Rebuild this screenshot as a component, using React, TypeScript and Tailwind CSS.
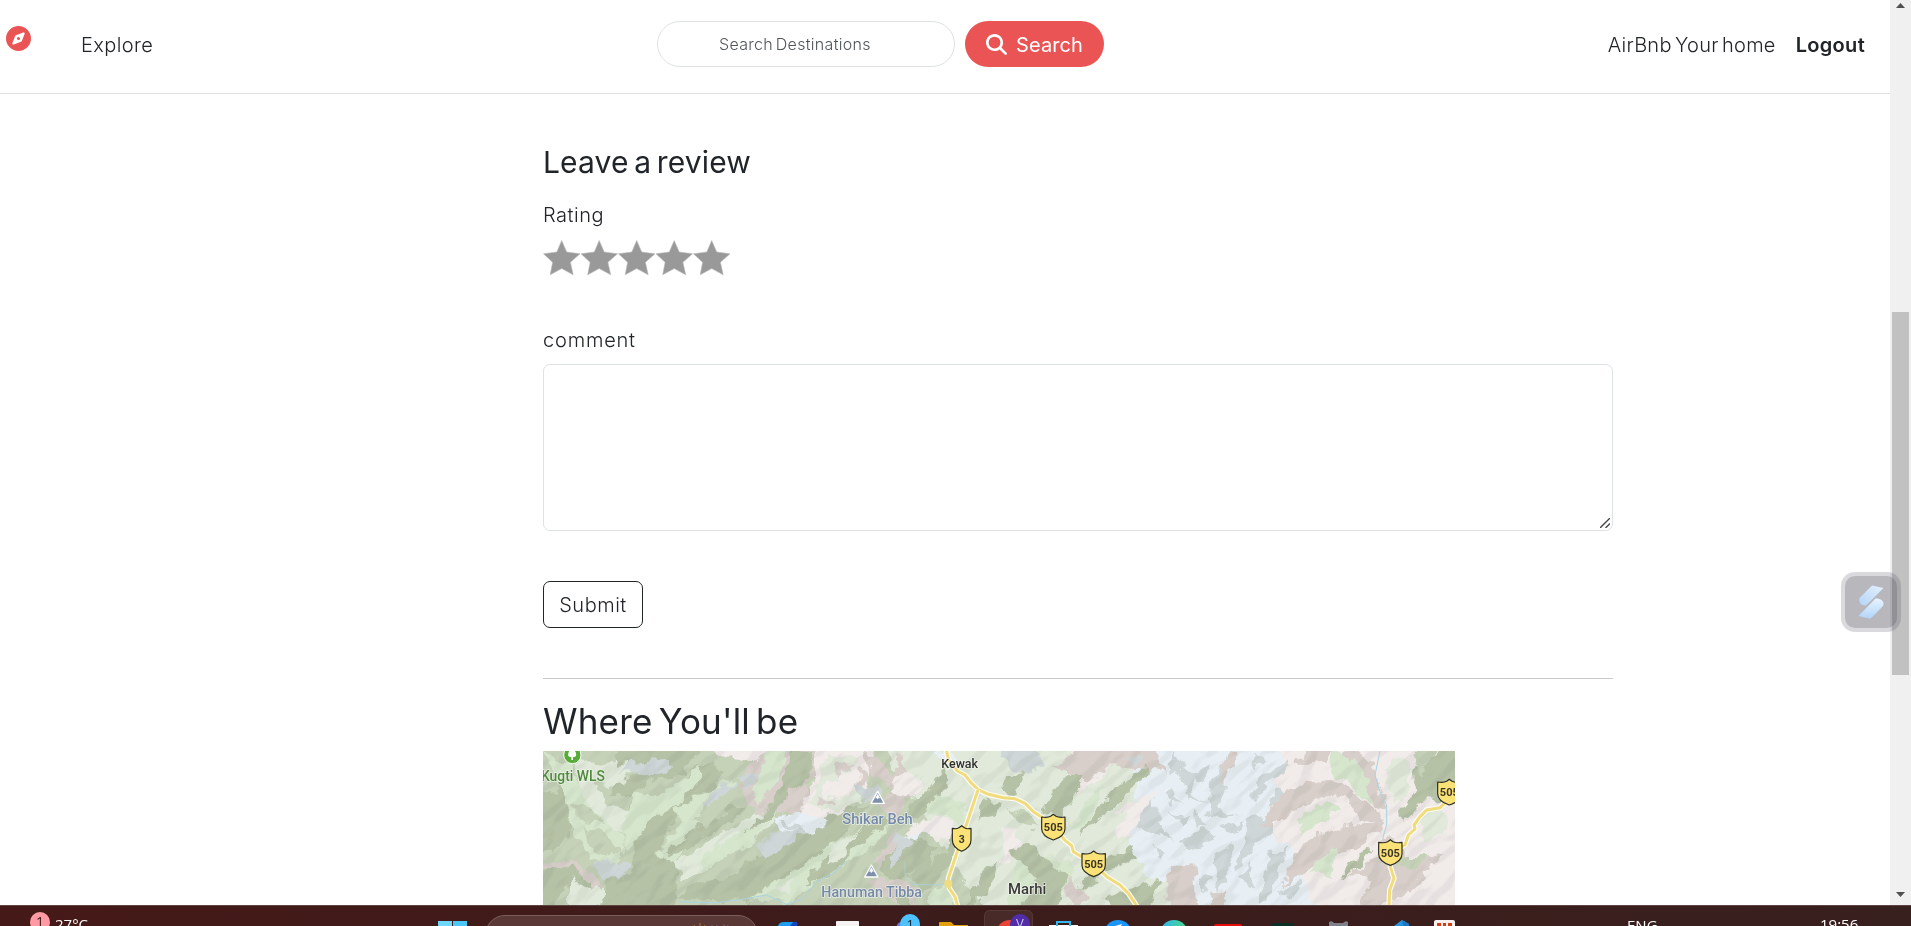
import React from "react";
import { FaCompass, FaMagnifyingGlass } from "react-icons/fa6";

const DARK = "#b6c2a6";
const MID = "#c5d2b8";
const LIGHT = "#d6e6cd";
const PALE = "#e0e9da";
const ROSE = "#d8cfca";
const BLUSH = "#f1ebea";
const ICE = "#e8eff4";
const SLATE = "#cfd6d7";

/* Terrain relief, drawn as broad fills first and finer slopes above them. */
const terrain: [string, string][] = [
  [PALE, "M-50 -50H2800V550H-50Z"],
  [MID, "M-50 -50H1700V550H-50Z"],
  [PALE, "M1000 -50H1800L1760 250 1830 550H1380L1200 300Z"],
  [ICE, "M1780 -50H2310L2220 140 2180 260 2290 330 2370 550H1960L1880 400 1760 330 1790 180Z"],
  [BLUSH, "M2240 -50H2800V550H2350L2270 330 2180 250Z"],
  // western valleys
  [LIGHT, "M10 20L90 60 130 140 210 180 250 290 230 380 190 370 150 330 90 250 60 120Z"],
  [PALE, "M90 30L180 60 230 40 300 70 220 130 160 110 190 170 260 190 300 240 250 270 140 180Z"],
  [DARK, "M-20 160L60 130 90 200 85 270 40 320 -20 330Z"],
  [DARK, "M240 0L490 0 430 90 330 110 280 150 210 150 240 110 320 80 290 50 220 60Z"],
  [SLATE, "M235 90L270 50 380 45 400 70 330 100 260 75Z"],
  [DARK, "M260 170L380 150 470 60 590 50 500 150 420 210 360 300 350 340 410 350 405 500H180L190 400 270 390 300 260Z"],
  [LIGHT, "M280 150L370 150 480 60 480 110 410 180 330 220 280 300 250 310 250 210Z"],
  [MID, "M130 250L200 260 240 320 220 340 160 320ZM90 180L150 190 190 230 140 230Z"],
  [ROSE, "M-10 355L70 345 140 370 180 410 175 445 155 440 130 390 80 365 -10 372Z"],
  [SLATE, "M150 360L200 350 270 360 250 400 190 400Z"],
  [DARK, "M-10 375L100 365 150 410 140 450 80 430 30 500H-10Z"],
  [PALE, "M90 400L150 440 170 420 200 450 150 500H90Z"],
  [LIGHT, "M400 190L600 90 600 130 510 200 450 280 410 350 360 345 355 320 420 240Z"],
  [DARK, "M450 265L520 190 610 120 630 140 600 210 530 250 460 300 380 340 370 325Z"],
  [SLATE, "M510 140L600 100 600 140 560 180 500 190Z"],
  [PALE, "M405 350L520 280 640 210 710 190 700 240 610 310 500 370 430 410Z"],
  [LIGHT, "M500 330L600 260 690 230 640 290 560 340 480 380Z"],
  [DARK, "M410 460L460 420 560 400 700 300 790 260 850 210 900 190 990 190 930 250 840 330 740 390 690 460 580 470Z"],
  [SLATE, "M640 300L720 260 800 260 740 300 680 340Z"],
  [LIGHT, "M620 460L690 420 760 380 860 310 980 240 1070 200 1000 300 920 350 820 420 750 475Z"],
  [DARK, "M790 420L850 350 940 270 1030 210 1050 230 960 300 890 370 830 410Z"],
  [PALE, "M880 300L960 260 920 320 860 370ZM700 430L760 400 740 450Z"],
  [MID, "M500 0H740L660 80 620 180 570 190 500 240 460 220 590 110 530 70Z"],
  [BLUSH, "M490 0H730L650 90 640 45 590 50Z"],
  [ROSE, "M620 70L720 0H860L800 110 790 210 710 200 650 210 630 170 600 130Z"],
  [LIGHT, "M690 0H740L720 100 650 180 640 130Z"],
  [DARK, "M750 0L820 25 800 100 720 170 700 210 620 260 690 190 740 100Z"],
  [BLUSH, "M830 0H1010L980 120 940 180 850 220 780 210 810 120Z"],
  [PALE, "M860 30L960 30 920 90 850 120 850 160 910 160 970 120 960 170 860 200 810 180 840 90Z"],
  [ROSE, "M880 50L940 60 900 100ZM830 150L880 170 840 190ZM960 60L990 90 950 140Z"],
  [ICE, "M705 220L770 200 870 220 830 250 760 265 710 260Z"],
  [SLATE, "M600 90L660 80 620 140ZM720 220L800 260 740 260ZM940 120L1010 130 1040 185 970 170Z"],
  [ROSE, "M960 0L1070 90 1080 20 1110 150 1160 90 1100 170 1060 240 1020 180 1050 130 990 80Z"],
  [BLUSH, "M1040 140L1090 80 1150 120 1100 160ZM1110 240L1180 220 1240 230 1230 300 1160 260 1090 290Z"],
  [DARK, "M1130 160L1220 70 1230 100 1190 180 1130 220 1090 220ZM1060 300L1110 270 1190 300 1170 370 1060 410 1010 370Z"],
  [SLATE, "M1060 250L1120 290 1100 310 1060 370Z"],
  [ICE, "M1090 270L1150 265 1130 290ZM1180 20L1240 20 1260 60 1210 50Z"],
  [ROSE, "M1040 300L1060 250 1075 270 1035 350 1000 370ZM980 410L1070 400 1140 440 1120 500 1060 470Z"],
  [DARK, "M1110 400L1210 330 1240 260 1260 300 1190 410 1150 440ZM1060 460L1130 430 1100 500Z"],
  [LIGHT, "M1190 150L1290 180 1260 230 1160 200ZM1170 440L1230 420 1240 500 1160 500Z"],
  [DARK, "M1270 500L1330 380 1380 350 1350 440ZM1330 170L1390 170 1370 220 1310 230Z"],
  // central ridges
  [SLATE, "M1380 0H1480L1520 60 1450 90 1400 50Z"],
  [BLUSH, "M1580 0H1780L1690 90 1600 150 1640 80ZM1380 240L1430 260 1440 310 1390 360ZM1730 200L1850 130 1800 240 1740 290Z"],
  [ROSE, "M1540 60L1660 0H1840L1880 80 1790 70 1720 60 1640 110Z"],
  [DARK, "M1400 90L1450 80 1430 150 1380 140ZM1500 190L1580 90 1630 90 1590 180 1550 230ZM1630 240L1690 170 1820 60 1820 85 1730 170 1660 240 1620 270Z"],
  [LIGHT, "M1650 150L1700 120 1630 250 1590 260ZM1430 340L1600 330 1590 420 1510 500H1400Z"],
  [MID, "M1470 250L1520 260 1560 310 1530 330ZM1400 190L1460 200 1500 240 1440 230Z"],
  [DARK, "M1410 320L1460 290 1580 400 1540 500H1440L1490 400ZM1680 340L1780 310 1790 340 1700 380 1620 440 1640 390ZM1690 460L1860 400 1820 500H1730Z"],
  [PALE, "M1500 230L1550 280 1600 350 1540 350 1480 280ZM1690 210L1760 200 1710 290 1680 310Z"],
  [ROSE, "M1590 400L1640 460 1620 500 1570 440ZM1860 380L1960 350 1970 500H1900Z"],
  // glacier field
  [SLATE, "M1810 190L1840 160 1850 240 1900 280 1830 260 1790 250ZM1910 60L1970 90 1950 150 2010 170 1940 160ZM2020 90L2060 60 2040 190 2090 220 2000 210ZM1910 290L1990 250 2040 280 1990 300 1940 320ZM2160 90L2210 70 2240 40 2230 90 2190 110 2140 180 2130 150ZM2120 230L2200 210 2190 260 2150 300 2090 370 2110 290ZM2180 330L2240 310 2200 430 2160 480 2170 390ZM2020 330L2080 300 2060 420 2030 440ZM1950 90L2010 60 1990 110Z"],
  [SLATE, "M1750 40L1820 30 1790 60ZM1900 20L1930 60 1890 80ZM1840 300L1870 330 1850 350ZM1880 190L1930 220 1960 210 1930 240ZM1960 190L2000 240 1970 250ZM2040 240L2110 230 2080 260ZM2200 130L2240 150 2190 180ZM2100 400L2140 350 2130 430ZM2220 440L2280 400 2260 470ZM1980 400L2010 380 2000 440ZM2140 30L2190 40 2150 70ZM1900 120L1920 180 1880 150ZM2060 20L2080 50 2050 60Z"],
  [ICE, "M2090 50L2120 60 2110 160 2160 190 2120 210 2060 180 2070 110ZM1830 330L1900 360 1870 420 1820 390Z"],
  [ROSE, "M2070 10L2090 20 2070 90 2040 130 2050 70ZM2010 440L2060 440 2050 490 2000 480Z"],
  // eastern slopes
  [ROSE, "M2160 240L2220 150 2320 105 2400 110 2470 170 2520 200 2530 230 2460 220 2420 160 2360 150 2260 190 2210 240Z"],
  [ROSE, "M2420 0L2490 50 2520 130 2540 200 2500 180 2460 90 2400 50ZM2270 60L2360 50 2400 0H2300ZM2260 330L2330 270 2510 220 2540 240 2440 310 2340 350 2260 400 2230 430Z"],
  [ROSE, "M2430 390L2520 330 2520 280 2570 280 2600 340 2700 330 2650 400 2580 460 2490 500H2440L2500 400Z"],
  [LIGHT, "M2380 0L2450 50 2480 110 2500 180 2450 150 2420 100 2370 90ZM2290 210L2360 170 2400 190 2350 230 2270 270ZM2330 350L2390 310 2370 400 2310 380Z"],
  [DARK, "M2620 80L2720 0H2800V170L2660 160 2590 230 2580 200 2630 140ZM2430 360L2470 310 2500 310 2460 360 2400 410Z"],
  [MID, "M2620 0H2700L2640 90ZM2580 330L2660 330 2630 370 2570 370Z"],
  [PALE, "M2550 40L2610 50 2610 140 2570 170 2530 120ZM2640 200L2700 190 2730 250 2650 290Z"],
];

const shields = [
  { x: 1265, y: 281, w: 60, label: "3" },
  { x: 1540, y: 247, w: 74, label: "505" },
  { x: 1661, y: 357, w: 74, label: "505" },
  { x: 2551, y: 323, w: 74, label: "505" },
  { x: 2728, y: 142, w: 74, label: "505" },
];

function Shield({ x, y, w, label }: { x: number; y: number; w: number; label: string }) {
  const h = w / 2 - 2;
  return (
    <g transform={`translate(${x} ${y})`}>
      <path
        d={`M${-h} -31 Q${-h / 2} -28 -8 -33 L0 -39 L8 -33 Q${h / 2} -28 ${h} -31 V4 C${h} 22 ${h / 2} 32 0 38 C${-h / 2} 32 ${-h} 22 ${-h} 4 Z`}
        fill="#fbe277"
        stroke="#2b2b22"
        strokeWidth="3.5"
        strokeLinejoin="round"
      />
      <text
        y="12"
        textAnchor="middle"
        textLength={label === "3" ? 18 : 57}
        lengthAdjust="spacingAndGlyphs"
        className="fill-[#3a3524] font-['Roboto',sans-serif] text-[33px] font-bold"
      >
        {label}
      </text>
    </g>
  );
}

function Road({ d }: { d: string }) {
  return (
    <g fill="none" strokeLinejoin="round">
      <path d={d} stroke="#fdfbf4" strokeWidth="16" />
      <path d={d} stroke="#f1dc7c" strokeWidth="9" />
    </g>
  );
}

function Peak({ x, y }: { x: number; y: number }) {
  return (
    <g transform={`translate(${x} ${y})`}>
      <path d="M0 -19L20 17H-20Z" fill="#7d8fa9" stroke="#fff" strokeWidth="4" strokeLinejoin="round" />
      <path d="M0 -12L8 3 4 0 0 5 -4 0 -8 3Z" fill="#fff" />
    </g>
  );
}

function MapLabel(p: { x: number; y: number; width: number; className: string; children: string }) {
  return (
    <text
      x={p.x}
      y={p.y}
      textLength={p.width}
      lengthAdjust="spacingAndGlyphs"
      stroke="#f4f6f0"
      strokeOpacity=".75"
      strokeWidth="5"
      strokeLinejoin="round"
      paintOrder="stroke"
      className={p.className}
    >
      {p.children}
    </text>
  );
}

function TerrainMap() {
  return (
    <svg viewBox="9 18 2736 462" className="block h-[154px] w-[912px] shrink-0">
      <defs>
        <filter id="rough" filterUnits="userSpaceOnUse" x="-40" y="-40" width="2830" height="580">
          <feTurbulence type="fractalNoise" baseFrequency=".025" numOctaves="3" seed="8" result="n" />
          <feDisplacementMap in="SourceGraphic" in2="n" scale="44" xChannelSelector="R" yChannelSelector="G" />
        </filter>
        <filter id="relief" filterUnits="userSpaceOnUse" x="-700" y="-1500" width="3600" height="3600">
          <feTurbulence type="fractalNoise" baseFrequency=".009 .018" numOctaves="2" seed="21" result="n" />
          <feColorMatrix in="n" type="matrix" values="0 0 0 0 0  0 0 0 0 0  0 0 0 0 0  1 0 0 0 0" result="a" />
          <feDiffuseLighting in="a" surfaceScale="75" diffuseConstant="1.15" lightingColor="#fff">
            <feDistantLight azimuth="270" elevation="55" />
          </feDiffuseLighting>
          <feComponentTransfer>
            <feFuncR type="discrete" tableValues="0.6 0.68 0.76 0.84 0.92 1" />
            <feFuncG type="discrete" tableValues="0.62 0.7 0.78 0.85 0.92 1" />
            <feFuncB type="discrete" tableValues="0.6 0.68 0.76 0.84 0.92 1" />
          </feComponentTransfer>
        </filter>
      </defs>
      <g filter="url(#rough)">
        {terrain.map(([fill, d], i) => (
          <path key={i} d={d} fill={fill} />
        ))}
      </g>
      <g className="mix-blend-multiply" opacity=".22">
        <g transform="rotate(-42 1370 250)">
          <rect x="-700" y="-1500" width="3600" height="3600" filter="url(#relief)" />
        </g>
      </g>
      <g fill="none" stroke="#a9d3e2" strokeWidth="3">
        <path d="M420 470L520 474 600 464 680 450 740 478 790 460 830 410 880 385 920 348" />
        <path d="M1095 350V390L1120 418 1180 420 1215 418" opacity=".7" />
        <path d="M2520 18L2505 90 2520 140 2540 180 2540 240 2528 280" />
      </g>
      <Road d="M1218 10L1226 45 1252 78 1275 90 1292 112 1314 134 1345 148 1390 158 1425 161 1455 175 1480 200 1510 220 1540 247 1575 286 1595 302 1600 320 1661 357 1700 395 1740 420 1765 445 1795 490" />
      <Road d="M1314 134L1265 281 1225 400 1228 430 1245 455 1255 490" />
      <Road d="M2728 160L2700 188 2660 195 2640 215 2622 240 2625 252 2605 270 2595 300 2551 323 2551 365 2562 400 2549 435 2547 490" />
      <circle cx="1225" cy="416" r="12" fill="#f1dc7c" />
      {shields.map((s) => (
        <Shield key={s.x} {...s} />
      ))}
      <circle cx="97" cy="30" r="26" fill="#57ad37" stroke="#fff" strokeWidth="3" />
      <path d="M97 15a11 11 0 0 1 11 12a7 7 0 0 1-5 9h-4v9h-5v-9h-4a7 7 0 0 1-5-9a11 11 0 0 1 12-12Z" fill="#fff" />
      <Peak x={1013} y={158} />
      <Peak x={994} y={379} />
      <MapLabel x={3} y={107} width={192} className="fill-[#4d8a3b] font-['Roboto',sans-serif] text-[44px] font-medium">
        Kugti WLS
      </MapLabel>
      <MapLabel x={907} y={236} width={211} className="fill-[#7488a8] font-['Roboto',sans-serif] text-[44px] font-medium">
        Shikar Beh
      </MapLabel>
      <MapLabel x={844} y={456} width={302} className="fill-[#7488a8] font-['Roboto',sans-serif] text-[44px] font-medium">
        Hanuman Tibba
      </MapLabel>
      <MapLabel x={1204} y={69} width={110} className="fill-[#2f2f2f] font-['Roboto',sans-serif] text-[40px] font-medium">
        Kewak
      </MapLabel>
      <MapLabel x={1404} y={446} width={115} className="fill-[#3a3a3a] font-['Roboto',sans-serif] text-[45px] font-medium">
        Marhi
      </MapLabel>
    </svg>
  );
}

function Navbar() {
  return (
    <header className="flex h-[94px] shrink-0 items-start border-b border-[#dee2e6] text-[20px] font-light leading-[30px]">
      <FaCompass className="ml-1.5 mt-[26px] size-[25px] text-[#ea5455]" />
      <a className="ml-[50px] mt-[30px] w-[576px] tracking-[0.4px]">Explore</a>
      <form className="mt-[21px] flex gap-2.5">
        <div className="flex h-[46px] w-[298px] items-center rounded-full border border-[#dee2e6] pl-[61px] text-[16px] tracking-[0.3px] text-[#50555a] [word-spacing:-2px]">
          Search Destinations
        </div>
        <button
          type="button"
          className="flex h-[46px] w-[139px] items-center rounded-full bg-[#ea5455] pl-[21px] font-normal text-white"
        >
          <FaMagnifyingGlass className="size-[21px]" />
          <span className="ml-[9px] mt-0.5 tracking-[0.1px]">Search</span>
        </button>
      </form>
      <nav className="ml-auto mr-[25px] mt-[30px] flex gap-[20px] whitespace-nowrap">
        <a className="tracking-[0.25px] [word-spacing:-2.5px]">AirBnb Your home</a>
        <a className="font-semibold tracking-[0.3px]">Logout</a>
      </nav>
    </header>
  );
}

function Stars() {
  return (
    <svg viewBox="0 0 187.5 37" className="mt-[10px] block h-[37px] w-[187.5px]">
      {[0, 1, 2, 3, 4].map((i) => (
        <path
          key={i}
          transform={`translate(${i * 37.5} 0)`}
          d="M18.7 .5L23.7 12 37 13.8 27.4 22.3 30.2 34.8 18.7 28.6 7.2 34.8 9.6 22.3 .5 13.8 13.8 12Z"
          fill="#999"
          stroke="#bbb"
          strokeWidth=".6"
        />
      ))}
    </svg>
  );
}

function ReviewForm() {
  return (
    <section className="flex flex-col items-start">
      <h4 className="mt-[50px] h-[36px] text-[30px] font-normal leading-[36px] tracking-[0.15px] [word-spacing:-3px]">
        Leave a review
      </h4>
      <label className="mt-[20px] h-[30px] leading-[30px] tracking-[0.5px]">Rating</label>
      <Stars />
      <label className="mt-[48px] h-[30px] leading-[30px] tracking-[0.8px]">comment</label>
      <div className="mt-[9px] flex h-[167px] w-[1070px] items-end justify-end rounded-[7px] border border-[#dee2e6] pb-0.5 pr-[2px]">
        <svg viewBox="0 0 10 10" className="size-[10px]" stroke="#444" strokeWidth="1.4">
          <path d="M0 10L10 0M5.500 10L10 5.500" />
        </svg>
      </div>
      <button
        type="button"
        className="mt-[50px] h-[47px] w-[100px] rounded-[7px] border border-[#212529] text-center leading-[44px] tracking-[0.5px]"
      >
        Submit
      </button>
      <hr className="mt-[50px] w-full border-[#c8c9ca]" />
    </section>
  );
}

function Scrollbar() {
  return (
    <aside className="flex w-[21px] shrink-0 flex-col items-center bg-[#f0f0f0]">
      <svg viewBox="0 0 9 5" className="mt-[3px] h-[5px] w-[9px]" fill="#505050">
        <path d="M0 5L4.500 0 9 5Z" />
      </svg>
      <div className="mt-[304px] h-[363px] w-[17px] bg-[#c1c1c1]" />
      <svg viewBox="0 0 9 5" className="mb-[8px] mt-auto h-[5px] w-[9px]" fill="#505050">
        <path d="M0 0L4.500 5 9 0Z" />
      </svg>
    </aside>
  );
}

function FloatingWidget() {
  return (
    <div className="absolute left-[1841px] top-[572px] size-[60px] rounded-[14px] bg-[#46465a]/20 p-1">
      <div className="flex size-[52px] items-center justify-center rounded-[10px] bg-[#3c3c46]/22">
        <svg viewBox="0 0 26 34" className="h-[34px] w-[26px]">
          <defs>
            <linearGradient id="s1" x1="1" y1="0" x2="0" y2="1">
              <stop offset="0" stopColor="#e4f1fd" />
              <stop offset="1" stopColor="#b4d5f8" />
            </linearGradient>
            <linearGradient id="s2" x1=".5" y1="0" x2=".5" y2="1">
              <stop offset="0" stopColor="#e9f4fe" />
              <stop offset="1" stopColor="#b0d4fa" />
            </linearGradient>
          </defs>
          <path d="M14 .5L25.500 3 8 20.500C3 21 0 17 1.500 13Z" fill="url(#s1)" />
          <path d="M.5 31L17.500 13.500C23 13 27 17 25 21L12.500 33.800Z" fill="url(#s2)" />
        </svg>
      </div>
    </div>
  );
}

function TaskbarIcons() {
  return (
    <svg viewBox="758 905 702 21" className="h-[21px] w-[702px] shrink-0">
      <path d="M778 926Q779 922 784 922H795Q798 922 797 926Z" fill="#1c9df0" />
      <path d="M790 926L793 922H795Q798 922 797 926Z" fill="#1245c8" />
      <rect x="836" y="921" width="23" height="6" rx="1" fill="#f4f2f2" />
      <circle cx="904" cy="929" r="8" fill="#7b6be0" />
      <circle cx="910" cy="924" r="10" fill="#4cc2ff" />
      <text x="906.500" y="928.500" className="fill-[#16242c] font-['Open_Sans',sans-serif] text-[13px] font-normal">1</text>
      <path d="M939 926V923Q939 922 940 922H951L954 925H968V927H939Z" fill="#e3a008" />
      <rect x="984.500" y="910.500" width="48" height="24" rx="5" fill="#482b28" stroke="#563936" />
      <circle cx="1010" cy="934" r="14" fill="#ea4335" />
      <circle cx="1020" cy="924" r="10" fill="#512da8" />
      <text x="1016" y="928" className="fill-[#cfc3ea] font-['Open_Sans',sans-serif] text-[13px] font-normal">V</text>
      <path d="M1049 925H1078V927H1049Z" fill="#fff" />
      <path d="M1057 926V922H1070V926" fill="none" stroke="#35b7ef" strokeWidth="2" />
      <circle cx="1118" cy="934" r="14" fill="#1b95f5" />
      <path d="M1115 926L1122 924 1120 928Z" fill="#fff" />
      <defs>
        <linearGradient id="edge">
          <stop offset="0" stopColor="#2fb4ee" />
          <stop offset="1" stopColor="#49d98a" />
        </linearGradient>
      </defs>
      <circle cx="1174" cy="934" r="14" fill="url(#edge)" />
      <rect x="1214" y="924" width="28" height="6" rx="2" fill="#e60d0d" />
      <rect x="1272" y="923" width="22" height="6" rx="2" fill="#0b3126" />
      <path d="M1329 926V922Q1332 920 1334 923H1343Q1346 920 1348 922V926Z" fill="#7d8088" />
      <path d="M1394 926L1402 920 1409 924V926Z" fill="#2596e0" />
      <path d="M1402 920L1409 924V926H1403Z" fill="#1c78c4" />
      <rect x="1434" y="920" width="21" height="10" rx="2" fill="#f6f1f0" />
      <path d="M1437 923H1441V927H1437ZM1443 923H1446V927H1443ZM1448 923H1452V927H1448Z" fill="#d43c14" />
    </svg>
  );
}

function Taskbar() {
  return (
    <footer className="flex h-[21px] shrink-0 overflow-hidden border-t border-[#5c4442] bg-linear-to-r from-[#451917] via-[#3c1c1b] to-[#38201e] font-['Open_Sans',sans-serif] text-[15px] font-normal leading-[20px] text-white">
      <span className="ml-[30px] mt-1.5 size-5 shrink-0 rounded-full bg-[#ff9aa5] text-center text-[14px] text-[#3a1518]">
        1
      </span>
      <span className="ml-[5px] mt-[8px] w-[383px] shrink-0">27°C</span>
      <span className="mt-[15px] h-[14px] w-[14px] shrink-0 bg-[#6fd7fb]" />
      <span className="ml-px mt-[15px] h-[14px] w-[14px] shrink-0 bg-[#4cc8f8]" />
      <div className="ml-[18px] mt-[9px] flex h-10 w-[273px] shrink-0 rounded-full border border-[#7b5f5d] bg-[#5a3836]">
        <svg viewBox="0 0 40 4" className="ml-[206px] mt-[7px] h-1 w-10">
          <path d="M3 4L2 2M8 4V0M12 4L13 2" stroke="#a87b2c" />
          <path d="M20 4V2M24 4L25 2M32 4V1M35 4L36 2" stroke="#7f5c73" />
        </svg>
      </div>
      <div className="-mt-px">
        <TaskbarIcons />
      </div>
      <span className="ml-[167px] mt-[9px] w-[193px] shrink-0">ENG</span>
      <span className="mt-[8px] shrink-0">19:56</span>
    </footer>
  );
}

export default function App() {
  return (
    <div className="relative flex h-[926px] w-[1911px] flex-col overflow-hidden bg-white font-['Inter',sans-serif] text-[20px] font-light text-[#212529]">
      <div className="flex h-[905px] shrink-0">
        <div className="flex min-w-0 flex-1 flex-col">
          <Navbar />
          <main className="ml-[543px] w-[1070px]">
            <ReviewForm />
            <h3 className="mt-[21px] h-[51px] text-[35px] font-normal leading-[42px] tracking-[0.2px] [word-spacing:-4px]">
              Where You'll be
            </h3>
            <TerrainMap />
          </main>
        </div>
        <Scrollbar />
      </div>
      <Taskbar />
      <FloatingWidget />
    </div>
  );
}
